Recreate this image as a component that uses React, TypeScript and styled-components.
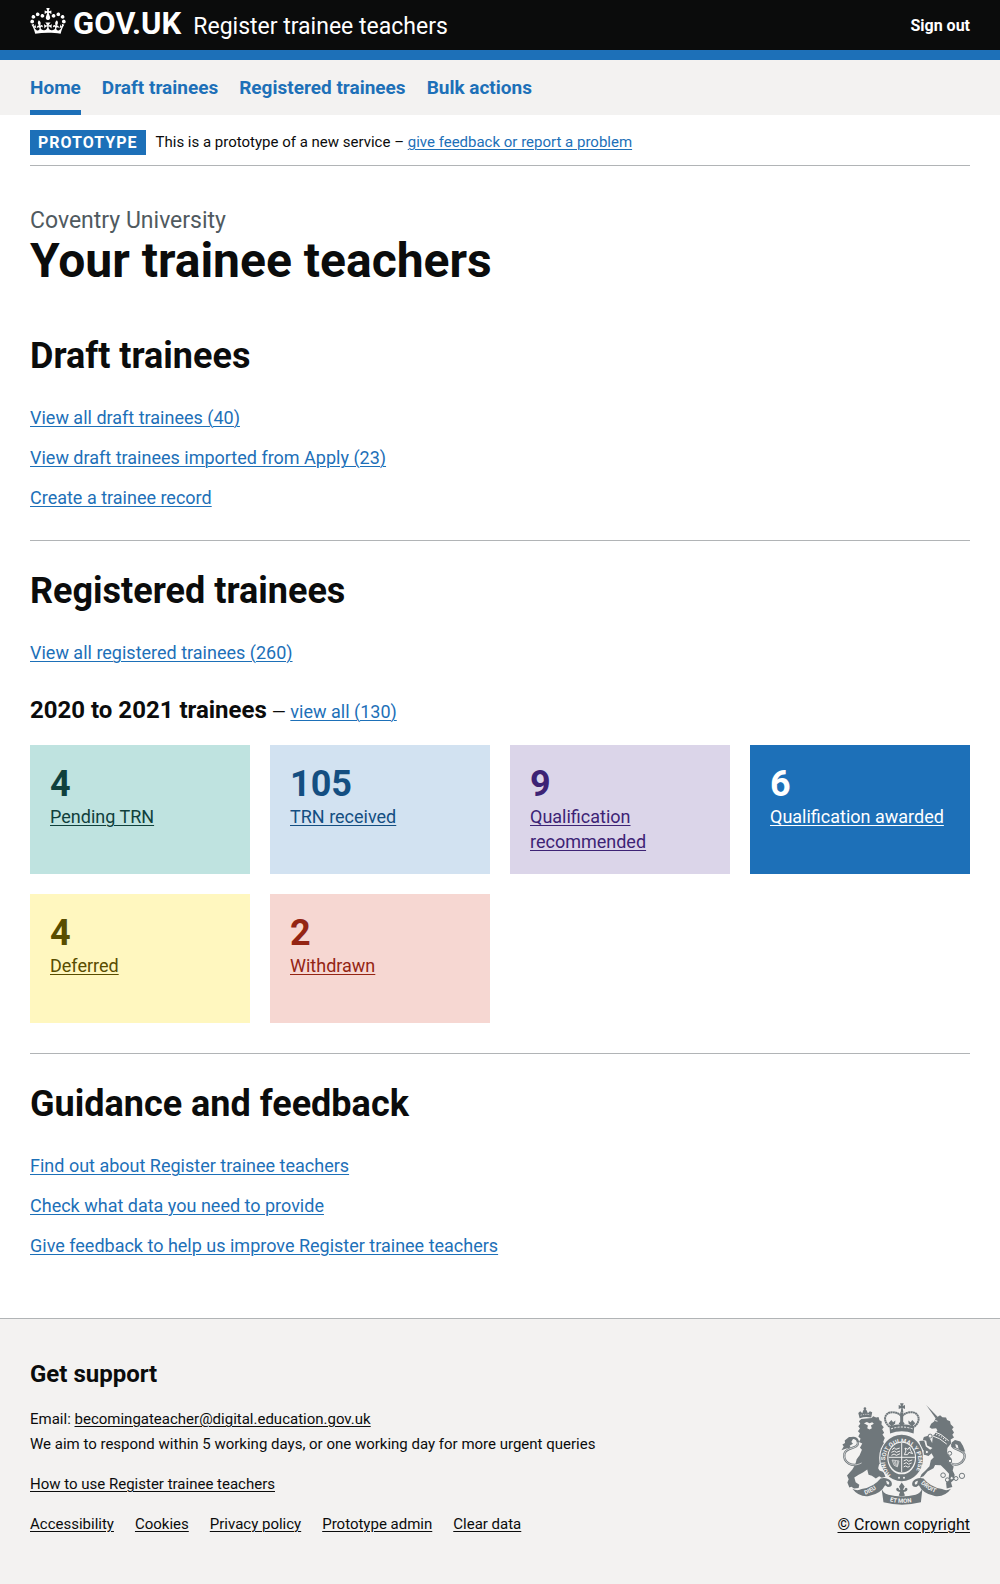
import React from 'react';
import styled, { createGlobalStyle } from 'styled-components';

const colour = {
  black: '#0b0c0c',
  blue: '#1d70b8',
  grey: '#f3f2f1',
  border: '#b1b4b6',
  secondary: '#505a5f',
  crest: '#6f777b',
};

const GlobalStyle = createGlobalStyle`
  *, *::before, *::after { box-sizing: border-box; }
  html { background: ${colour.grey}; }
  body {
    margin: 0;
    color: ${colour.black};
    background: #ffffff;
    font-family: Roboto, "Liberation Sans", sans-serif;
    font-size: 18px;
    line-height: 25px;
  }
  h1, h2, h3, p, ul { margin: 0; padding: 0; }
  ul { list-style: none; }
`;

const Container = styled.div`
  max-width: 960px;
  margin: 0 30px;

  @media (min-width: 1020px) {
    margin: 0 auto;
  }
`;

const Header = styled.header`
  background: ${colour.black};
  border-bottom: 10px solid ${colour.blue};
`;

const HeaderRow = styled(Container)`
  display: flex;
  align-items: center;
  justify-content: space-between;
  min-height: 50px;
`;

const HeaderBrand = styled.div`
  display: flex;
  align-items: baseline;
  gap: 12px;
  line-height: 30px;
`;

const HomeLink = styled.a`
  display: flex;
  align-items: baseline;
  gap: 7px;
  color: #ffffff;
  font-size: 31px;
  font-weight: 700;
  text-decoration: none;
`;

const CrownIcon = styled.svg`
  margin-bottom: -2px;
`;

const ServiceLink = styled.a`
  color: #ffffff;
  font-size: 23px;
  text-decoration: none;
`;

const SignOut = styled.a`
  color: #ffffff;
  font-size: 16px;
  font-weight: 700;
  text-decoration: none;
`;

const Nav = styled.nav`
  background: ${colour.grey};
`;

const NavList = styled.ul`
  display: flex;
  flex-wrap: wrap;
  gap: 0 21px;
  padding-top: 15px;
`;

const NavLink = styled.a<{ $current?: boolean }>`
  display: block;
  padding-bottom: 10px;
  border-bottom: 5px solid ${({ $current }) => ($current ? colour.blue : 'transparent')};
  color: ${colour.blue};
  font-size: 19px;
  font-weight: 700;
  text-decoration: none;
`;

const Link = styled.a<{ $plain?: boolean }>`
  color: ${({ $plain }) => ($plain ? colour.black : colour.blue)};
  text-decoration: underline;
  text-decoration-thickness: 1px;
  text-underline-offset: 2px;
`;

const PhaseBanner = styled.div`
  display: flex;
  align-items: center;
  gap: 10px;
  padding: 15px 0 10px;
  border-bottom: 1px solid ${colour.border};
  font-size: 15px;
`;

const Tag = styled.strong`
  padding: 0 8px;
  background: ${colour.blue};
  color: #ffffff;
  font-size: 16px;
  letter-spacing: 1px;
  text-transform: uppercase;
`;

const Main = styled.main`
  padding: 40px 0 30px;
`;

const Caption = styled.span`
  display: block;
  color: ${colour.secondary};
  font-size: 23px;
  line-height: 30px;
`;

const PageTitle = styled.h1`
  margin-bottom: 50px;
  font-size: 48px;
  line-height: 50px;
`;

const Section = styled.section`
  & + & {
    border-top: 1px solid ${colour.border};
    padding-top: 30px;
  }
`;

const SectionTitle = styled.h2`
  margin-bottom: 29px;
  font-size: 36px;
  line-height: 40px;
`;

const LinkList = styled.ul`
  display: grid;
  gap: 15px;
  padding-bottom: 30px;
`;

const YearHeading = styled.div`
  display: flex;
  align-items: baseline;
  gap: 5px;
  margin-bottom: 18px;
  line-height: 30px;
`;

const YearTitle = styled.h3`
  font-size: 24px;
`;

const Cards = styled.ul`
  display: grid;
  grid-template-columns: repeat(auto-fill, minmax(200px, 1fr));
  grid-auto-rows: 1fr;
  gap: 20px;
  padding-bottom: 30px;
`;

const Card = styled.a<{ $background: string; $colour: string }>`
  display: block;
  height: 100%;
  padding: 20px;
  background: ${({ $background }) => $background};
  color: ${({ $colour }) => $colour};
  text-decoration: none;
`;

const CardCount = styled.strong`
  display: block;
  font-size: 36px;
  line-height: 39px;
`;

const CardLabel = styled.span`
  text-decoration: underline;
  text-decoration-thickness: 1px;
  text-underline-offset: 2px;
`;

const Footer = styled.footer`
  padding: 40px 0 47px;
  border-top: 1px solid ${colour.border};
  background: ${colour.grey};
  font-size: 15px;
`;

const FooterRow = styled(Container)`
  display: flex;
  flex-wrap: wrap;
  align-items: flex-end;
  justify-content: space-between;
  gap: 30px;
`;

const FooterTitle = styled.h2`
  margin-bottom: 18px;
  font-size: 24px;
  line-height: 30px;
`;

const FooterText = styled.p`
  margin-bottom: 15px;
`;

const FooterLinks = styled.ul`
  display: flex;
  flex-wrap: wrap;
  gap: 0 21px;
`;

const Copyright = styled.a`
  display: flex;
  flex-direction: column;
  align-items: center;
  gap: 7px;
  color: ${colour.black};
  font-size: 16px;
  text-decoration: underline;
  text-decoration-thickness: 1px;
  text-underline-offset: 2px;
`;

const Crown = () => (
  <CrownIcon width="36" height="26" viewBox="0 0 132 97" aria-hidden="true">
    <path
      fill="currentColor"
      fillRule="evenodd"
      d="M25 30.2c3.5 1.5 7.7-.2 9.1-3.7 1.5-3.6-.2-7.8-3.9-9.2-3.6-1.4-7.6.3-9.1 3.9-1.4 3.5.3 7.5 3.9 9zM9 39.5c3.6 1.5 7.8-.2 9.2-3.7 1.5-3.6-.2-7.8-3.9-9.1-3.6-1.5-7.6.2-9.1 3.8-1.4 3.5.3 7.5 3.8 9zM4.4 57.2c3.5 1.5 7.7-.2 9.1-3.8 1.5-3.6-.2-7.7-3.9-9.1-3.5-1.5-7.6.3-9.1 3.8-1.4 3.5.3 7.6 3.9 9.1zm38.3-21.4c3.5 1.5 7.7-.2 9.1-3.8 1.5-3.6-.2-7.7-3.9-9.1-3.6-1.5-7.6.3-9.1 3.8-1.3 3.6.4 7.7 3.9 9.1zm64.4-5.6c-3.6 1.5-7.8-.2-9.1-3.7-1.5-3.6.2-7.8 3.8-9.2 3.6-1.4 7.7.3 9.2 3.9 1.3 3.5-.4 7.5-3.9 9zm15.9 9.3c-3.6 1.5-7.7-.2-9.1-3.7-1.5-3.6.2-7.8 3.7-9.1 3.6-1.5 7.7.2 9.2 3.8 1.5 3.5-.3 7.5-3.8 9zm4.7 17.7c-3.6 1.5-7.8-.2-9.2-3.8-1.5-3.6.2-7.7 3.9-9.1 3.6-1.5 7.7.3 9.2 3.8 1.3 3.5-.4 7.6-3.9 9.1zM89.3 35.8c-3.6 1.5-7.8-.2-9.2-3.8-1.4-3.6.2-7.7 3.9-9.1 3.6-1.5 7.7.3 9.2 3.8 1.4 3.6-.3 7.7-3.9 9.1zM69.7 17.7l8.9 4.7V9.3l-8.9 2.8c-.2-.3-.5-.6-.9-.9L72.4 0H59.6l3.5 11.2c-.3.3-.6.5-.9.9l-8.8-2.8v13.1l8.8-4.7c.3.3.6.7.9.9l-5 15.4v.1c-.2.8-.4 1.6-.4 2.4 0 4.1 3.1 7.5 7 8.1h.2c.3 0 .7.1 1 .1.4 0 .7 0 1-.1h.2c4-.6 7.1-4.1 7.1-8.1 0-.8-.1-1.7-.4-2.4V34l-5.1-15.4c.4-.2.7-.6 1-.9zM66 92.8c16.9 0 32.8 1.1 47.1 3.2 4-16.9 8.9-26.7 14-33.5l-9.6-3.4c1 4.9 1.1 7.2 0 10.2-1.5-1.4-3-4.3-4.2-8.7L108.6 76c2.8-2 5-3.2 7.5-3.3-4.4 9.4-10 11.9-13.6 11.2-4.3-.8-6.3-4.6-5.6-7.9 1-4.7 5.7-5.9 8-.5 4.3-8.7-3-11.4-7.6-8.8 7.1-7.2 7.9-13.5 2.1-21.1-8 6.1-8.1 12.3-4.5 20.8-4.7-5.4-12.1-2.5-9.5 6.2 3.4-5.2 7.9-2 7.2 3.1-.6 4.3-6.4 7.8-13.5 7.2-10.3-.9-10.9-8-11.2-13.8 2.5-.5 7.1 1.8 11 7.3L80.2 60c-4.1 4.4-8 5.3-12.3 5.4 1.4-4.4 8-11.6 8-11.6H55.5s6.4 7.2 7.9 11.6c-4.2-.1-8-1-12.3-5.4l1.4 16.4c3.9-5.5 8.5-7.7 10.9-7.3-.3 5.8-.9 12.8-11.1 13.8-7.2.6-12.9-2.9-13.5-7.2-.7-5 3.8-8.3 7.1-3.1 2.7-8.7-4.6-11.6-9.4-6.2 3.7-8.5 3.6-14.7-4.6-20.8-5.8 7.6-5 13.9 2.2 21.1-4.7-2.6-11.9.1-7.7 8.8 2.3-5.5 7.1-4.2 8.1.5.7 3.3-1.3 7.1-5.7 7.9-3.5.7-9-1.8-13.5-11.2 2.5.1 4.7 1.3 7.5 3.3l-4.7-15.4c-1.2 4.4-2.7 7.2-4.3 8.7-1.1-3-.9-5.3 0-10.2l-9.5 3.4c5 6.9 9.9 16.7 14 33.5 14.8-2.1 30.8-3.2 47.7-3.2z"
    />
  </CrownIcon>
);

const MottoText = styled.text`
  fill: ${colour.grey};
  font-size: 18px;
  font-weight: 700;
`;

const RoyalArms = () => (
  <svg width="125" height="102" viewBox="66 66 375 308" fill={colour.crest} aria-hidden="true">
    <defs>
      <path id="garter" d="M215 283A50 55 0 1 1 281 283" />
      <path id="ribbon-left" d="M138 343Q168 333 192 306" />
      <path id="ribbon-right" d="M306 309Q330 333 366 343" />
      <path id="ribbon-centre" d="M212 363Q249 373 296 362" />
    </defs>

    {/* Lion: crown, body, face and tail */}
    <path d="M121 112L117 96L123 91L129 97L132 88L137 85L142 88L146 97L152 91L159 94L156 110Q139 105 121 112Z" />
    <circle cx="137" cy="83" r="4" />
    <path d="M124 103Q139 98 153 102" fill="none" stroke={colour.grey} strokeWidth="2" strokeDasharray="4 3" />
    <path d="M119 121L126 114L157 111L162 106L171 110L178 108L181 118L188 122L187 131L194 139L189 145L195 156L190 161L197 172L192 184L200 195L196 211L187 222L195 234L205 247L211 262L202 255L195 263L188 252L180 250L177 263L181 270L193 274L199 289L188 292L180 287L170 294L158 286L148 283L144 267L131 276L118 283L105 291L109 305L120 313L118 323L104 324L96 319L90 321L84 306L88 296L83 285L91 276L99 267L108 252L112 236L121 224L128 207L122 201L129 188L119 184L124 174L117 167L122 157L116 151L122 143L117 136L123 129Z" />
    <path d="M134 127L143 123L151 127L159 124L164 129L155 134L158 142L151 146L144 142L146 134Z" fill={colour.grey} />
    <path d="M127 247C97 263 71 244 75 220C79 197 119 207 116 184C114 171 101 168 91 175" fill="none" stroke={colour.crest} strokeWidth="7" />
    <path d="M127 247C97 263 71 244 75 220C79 197 119 207 116 184" fill="none" stroke={colour.grey} strokeWidth="2" />
    <path d="M104 169L89 169L76 179L77 187L69 191L73 197L66 209L79 204L94 200L91 195L101 189L96 184Z" />

    {/* Unicorn: horn, body, collar, tail and chain */}
    <path d="M322 72L357 108L351 113Z" />
    <path d="M351 111L364 103L371 109L382 110L385 117L394 121L396 130L405 139L400 145L406 155L401 162L406 170L396 176L397 188L386 202L385 218L400 236L393 247L405 258L402 270L408 283L406 298L397 306L401 320L384 324L382 307L390 295L391 280L379 267L366 254L349 253L344 263L326 273L314 287L303 292L308 281L320 270L332 257L336 239L345 230L338 218L329 226L317 222L307 229L315 210L306 201L301 181L316 179L321 197L334 207L341 202L325 194L322 180L312 177L315 169L328 165L333 173L340 187L342 166L356 149L352 142L339 144L332 139L337 129L346 122Z" />
    <path d="M341 150Q368 158 390 180M338 164Q364 171 384 190" fill="none" stroke={colour.grey} strokeWidth="3" />
    <path d="M345 158Q366 164 385 183" fill="none" stroke={colour.grey} strokeWidth="4" strokeDasharray="3 5" />
    <path d="M349 119L356 121" stroke={colour.grey} strokeWidth="3" />
    <path d="M389 240C409 267 445 242 437 220C430 204 398 208 401 190" fill="none" stroke={colour.crest} strokeWidth="7" />
    <path d="M389 240C409 267 445 242 437 220C430 204 398 208 401 190" fill="none" stroke={colour.grey} strokeWidth="2" />
    <path d="M398 199L399 185L409 178L425 182L433 195L440 213L427 210L420 205L417 193L410 190L412 202Z" />
    <g fill={colour.grey} stroke={colour.crest} strokeWidth="3">
      <circle cx="334" cy="166" r="6" />
      <circle cx="324" cy="214" r="5" />
      <circle cx="393" cy="218" r="6" />
      <circle cx="394" cy="241" r="5" />
      <circle cx="373" cy="284" r="7" />
      <circle cx="386" cy="298" r="6" />
      <circle cx="399" cy="293" r="5" />
      <circle cx="412" cy="294" r="6" />
      <circle cx="430" cy="286" r="8" />
    </g>

    {/* Central crown */}
    <path d="M243 67L254 67L251 75L258 72L258 84L251 81L253 94L245 94L247 81L239 84L239 72L246 75Z" />
    <path d="M212 138C187 118 198 92 222 94Q240 95 248 108Q256 95 275 94C299 92 310 119 285 138" fill="none" stroke={colour.crest} strokeWidth="6" strokeDasharray="6 1" />
    <path d="M248 94L248 140" stroke={colour.crest} strokeWidth="9" />
    <path d="M217 117L222 124L229 119L228 129L217 137L208 127ZM280 117L275 124L268 119L269 129L280 137L289 127ZM248 118L257 128L248 137L239 128Z" />
    <path d="M211 136Q248 125 286 136L284 158Q248 145 213 158Z" />
    <path d="M216 144Q248 133 281 144" fill="none" stroke={colour.grey} strokeWidth="3" strokeDasharray="6 4" />

    {/* Garter and shield */}
    <ellipse cx="248" cy="232" rx="68" ry="74" fill={colour.grey} />
    <ellipse cx="248" cy="232" rx="54" ry="60" fill="none" stroke={colour.crest} strokeWidth="21" />
    <MottoText>
      <textPath href="#garter">HONI SOIT QUI MAL Y PENSE</textPath>
    </MottoText>
    <ellipse cx="248" cy="231" rx="40" ry="45" />
    <path d="M248 187V275M209 230H288" stroke={colour.grey} strokeWidth="3" />
    <path d="M219 207L226 201L230 206L242 202M217 215L226 211L232 215L243 211M217 224L225 220L232 224L243 219M254 241L263 237L269 242L280 238M254 250L262 246L269 251L278 247M254 259L260 256L267 260L273 256" fill="none" stroke={colour.grey} strokeWidth="3" />
    <path d="M256 222L261 211L258 202L267 206L272 199L275 209L281 219L270 215L266 222Z" fill="none" stroke={colour.grey} strokeWidth="3" />
    <path d="M219 238L240 241L235 259L225 254ZM224 240L229 254M229 240L232 256M235 241L235 257" fill="none" stroke={colour.grey} strokeWidth="2" />
    <circle cx="240" cy="292" r="3" fill={colour.grey} />
    <circle cx="255" cy="292" r="3" fill={colour.grey} />

    {/* Motto ribbon and lily */}
    <path d="M99 325Q114 333 127 326Q164 320 184 294Q205 289 217 304Q223 320 206 320L198 314Q186 339 149 347Q119 351 99 325Z" />
    <path d="M397 325Q383 333 370 326Q334 320 314 294Q293 289 281 304Q275 320 292 320L300 314Q311 339 348 347Q378 351 397 325Z" />
    <path d="M201 301Q213 303 210 311Q206 314 203 309ZM297 301Q285 303 288 311Q292 314 295 309Z" fill={colour.grey} />
    <path d="M187 322Q190 338 208 343Q248 353 290 343Q306 338 311 322L306 366Q248 380 193 366Z" />
    <path d="M248 306L257 318L252 328L256 329Q259 318 265 324Q268 332 254 335L258 345L248 348L239 345L243 335Q229 332 232 324Q237 318 241 329L244 328L240 318Z" />
    <MottoText>
      <textPath href="#ribbon-left">DIEU</textPath>
    </MottoText>
    <MottoText>
      <textPath href="#ribbon-right">DROIT</textPath>
    </MottoText>
    <MottoText>
      <textPath href="#ribbon-centre">ET MON</textPath>
    </MottoText>
  </svg>
);

const navItems = ['Home', 'Draft trainees', 'Registered trainees', 'Bulk actions'];

const draftLinks = [
  'View all draft trainees (40)',
  'View draft trainees imported from Apply (23)',
  'Create a trainee record',
];

const statuses = [
  { count: 4, label: 'Pending TRN', background: '#bfe3e0', text: '#10403c' },
  { count: 105, label: 'TRN received', background: '#d2e2f1', text: '#144e81' },
  { count: 9, label: 'Qualification recommended', background: '#dbd5e9', text: '#3d2375' },
  { count: 6, label: 'Qualification awarded', background: colour.blue, text: '#ffffff' },
  { count: 4, label: 'Deferred', background: '#fff7bf', text: '#594d00' },
  { count: 2, label: 'Withdrawn', background: '#f6d7d2', text: '#942514' },
];

const guidanceLinks = [
  'Find out about Register trainee teachers',
  'Check what data you need to provide',
  'Give feedback to help us improve Register trainee teachers',
];

const footerLinks = ['Accessibility', 'Cookies', 'Privacy policy', 'Prototype admin', 'Clear data'];

const Links = ({ items }: { items: string[] }) => (
  <LinkList>
    {items.map((item) => (
      <li key={item}>
        <Link href="#">{item}</Link>
      </li>
    ))}
  </LinkList>
);

export default function App() {
  return (
    <>
      <GlobalStyle />
      <Header>
        <HeaderRow>
          <HeaderBrand>
            <HomeLink href="#">
              <Crown />
              GOV.UK
            </HomeLink>
            <ServiceLink href="#">Register trainee teachers</ServiceLink>
          </HeaderBrand>
          <SignOut href="#">Sign out</SignOut>
        </HeaderRow>
      </Header>

      <Nav>
        <Container>
          <NavList>
            {navItems.map((item, index) => (
              <li key={item}>
                <NavLink href="#" $current={index === 0}>
                  {item}
                </NavLink>
              </li>
            ))}
          </NavList>
        </Container>
      </Nav>

      <Container>
        <PhaseBanner>
          <Tag>Prototype</Tag>
          <span>
            This is a prototype of a new service – <Link href="#">give feedback or report a problem</Link>
          </span>
        </PhaseBanner>

        <Main>
          <Caption>Coventry University</Caption>
          <PageTitle>Your trainee teachers</PageTitle>

          <Section>
            <SectionTitle>Draft trainees</SectionTitle>
            <Links items={draftLinks} />
          </Section>

          <Section>
            <SectionTitle>Registered trainees</SectionTitle>
            <Links items={['View all registered trainees (260)']} />
            <YearHeading>
              <YearTitle>2020 to 2021 trainees</YearTitle>
              <span>
                — <Link href="#">view all (130)</Link>
              </span>
            </YearHeading>
            <Cards>
              {statuses.map(({ count, label, background, text }) => (
                <li key={label}>
                  <Card href="#" $background={background} $colour={text}>
                    <CardCount>{count}</CardCount>
                    <CardLabel>{label}</CardLabel>
                  </Card>
                </li>
              ))}
            </Cards>
          </Section>

          <Section>
            <SectionTitle>Guidance and feedback</SectionTitle>
            <Links items={guidanceLinks} />
          </Section>
        </Main>
      </Container>

      <Footer>
        <FooterRow>
          <div>
            <FooterTitle>Get support</FooterTitle>
            <FooterText>
              Email:{' '}
              <Link href="#" $plain>
                becomingateacher@digital.education.gov.uk
              </Link>
              <br />
              We aim to respond within 5 working days, or one working day for more urgent queries
            </FooterText>
            <FooterText>
              <Link href="#" $plain>
                How to use Register trainee teachers
              </Link>
            </FooterText>
            <FooterLinks>
              {footerLinks.map((item) => (
                <li key={item}>
                  <Link href="#" $plain>
                    {item}
                  </Link>
                </li>
              ))}
            </FooterLinks>
          </div>
          <Copyright href="#">
            <RoyalArms />
            <span>© Crown copyright</span>
          </Copyright>
        </FooterRow>
      </Footer>
    </>
  );
}
